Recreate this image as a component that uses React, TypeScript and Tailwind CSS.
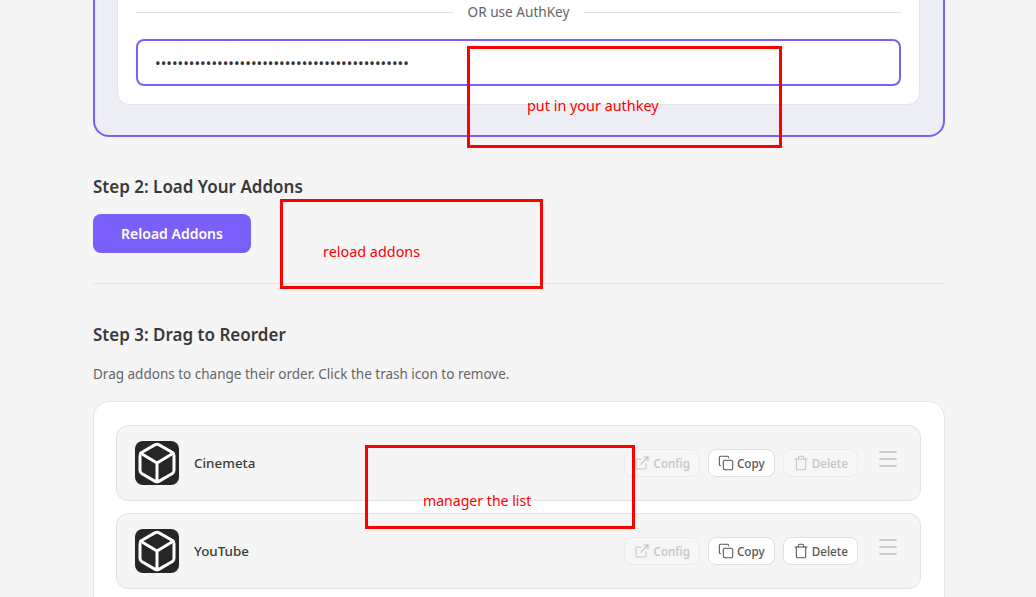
import { Copy, ExternalLink, Menu, Trash } from 'lucide-react';

const addons = [
  { name: 'Cinemeta', canDelete: false },
  { name: 'YouTube', canDelete: true },
];

// cube logo of an addon
function CubeIcon() {
  return (
    <svg viewBox="0 0 44 44" className="h-[44px] w-[44px]" fill="none" stroke="white" strokeWidth="3" strokeLinejoin="round" strokeLinecap="round">
      <path d="M19.8 3.9 7 11.2a4 4 0 0 0-2 3.5v14.6a4 4 0 0 0 2 3.5l12.8 7.3a4.4 4.4 0 0 0 4.4 0L37 32.8a4 4 0 0 0 2-3.5V14.7a4 4 0 0 0-2-3.5L24.2 3.9a4.4 4.4 0 0 0-4.4 0Z" />
      <path d="M5.8 12.2 22 22l16.2-9.8" />
      <path d="M22 22v18.4" />
    </svg>
  );
}

function ActionButton({
  label,
  disabled,
  children,
}: {
  label: string;
  disabled?: boolean;
  children: React.ReactNode;
}) {
  return (
    <button
      className={`flex h-[28px] items-center gap-[3px] rounded-lg border px-[9px] text-[11.7px] font-medium ${
        disabled
          ? 'border-[#ebebeb] bg-[#f6f6f6] text-[#c4c4c4]'
          : 'border-[#e0e0e0] bg-white text-[#555555]'
      }`}
    >
      {children}
      {label}
    </button>
  );
}

function AddonRow({ name, canDelete }: { name: string; canDelete: boolean }) {
  return (
    <div className="flex h-[76px] shrink-0 items-center rounded-xl border border-[#e2e2e2] bg-[#f5f5f5] pl-[18px] pr-[20px]">
      <div className="flex h-[44px] w-[44px] items-center justify-center rounded-lg bg-[#262626]">
        <CubeIcon />
      </div>
      <span className="ml-[15px] text-[13.4px] font-medium text-[#3a3a3a]">{name}</span>
      <div className="ml-auto flex items-center gap-[8px]">
        <ActionButton label="Config" disabled>
          <ExternalLink className="h-[16px] w-[16px]" strokeWidth={1.6} />
        </ActionButton>
        <ActionButton label="Copy">
          <Copy className="h-[16px] w-[16px]" strokeWidth={1.6} />
        </ActionButton>
        <ActionButton label="Delete" disabled={!canDelete}>
          <Trash className="h-[16px] w-[16px]" strokeWidth={1.6} />
        </ActionButton>
        <Menu className="mb-[8px] ml-[10px] h-[24px] w-[24px] text-[#cccccc]" strokeWidth={1.8} />
      </div>
    </div>
  );
}

function Note({ className, label }: { className: string; label: string }) {
  return (
    <div className={`absolute border-[3px] border-[#ff0000] ${className}`}>
      <span className="absolute whitespace-nowrap text-[#ff0000]">{label}</span>
    </div>
  );
}

export default function App() {
  return (
    <div className="relative h-[597px] w-[1036px] overflow-hidden bg-[#f5f5f5] font-['Noto_Sans','Open_Sans',sans-serif]">
      <div className="ml-[93px] -mt-[63px] w-[852px]">
        {/* AuthKey card, top is scrolled away */}
        <div className="rounded-2xl border-2 border-[#7b5ffa] bg-[#edeef5] pb-[30px] pl-[22px] pr-[23px] pt-[22px]">
          <div className="rounded-xl border border-[#e4e4e4] bg-white px-[18px] pb-[18px] pt-[40px]">
            <div className="flex items-center gap-[15px] text-[13.6px] text-[#666666]">
              <div className="h-px flex-1 bg-[#e0e0e0]" />
              <span>OR use AuthKey</span>
              <div className="h-px flex-1 bg-[#e0e0e0]" />
            </div>
            <input
              type="password"
              readOnly
              value="000000000000000000000000000000000000000000000"
              className="mt-[17px] block h-[47px] w-full rounded-lg border-2 border-[#7b5ffa] bg-white px-[17px] text-[15px] text-[#333333] outline-none"
            />
          </div>
        </div>

        <h2 className="mt-[38px] text-[17px] font-semibold leading-[24px] text-[#3a3a3a]">
          Step 2: Load Your Addons
        </h2>
        <button className="mt-[15px] block h-[39px] w-[158px] rounded-lg bg-[#7b5ffa] text-[14px] font-semibold text-white">
          Reload Addons
        </button>
        <div className="mt-[30px] h-px bg-[#e2e2e2]" />

        <h2 className="mt-[39px] text-[17px] font-semibold leading-[24px] text-[#3a3a3a]">
          Step 3: Drag to Reorder
        </h2>
        <p className="mt-[18px] text-[13.5px] leading-[18px] text-[#666666]">
          Drag addons to change their order. Click the trash icon to remove.
        </p>
        <div className="mt-[18px] flex flex-col gap-[12px] rounded-2xl border border-[#e4e4e4] bg-white pb-[23px] pl-[22px] pr-[23px] pt-[23px]">
          {addons.map((a) => (
            <AddonRow key={a.name} name={a.name} canDelete={a.canDelete} />
          ))}
        </div>
      </div>

      <Note className="left-[467px] top-[46px] h-[102px] w-[315px] text-[14.4px] [&>span]:left-[57px] [&>span]:top-[46px]" label="put in your authkey" />
      <Note className="left-[280px] top-[199px] h-[90px] w-[263px] text-[14.4px] [&>span]:left-[40px] [&>span]:top-[39px]" label="reload addons" />
      <Note className="left-[365px] top-[445px] h-[84px] w-[270px] text-[14.1px] [&>span]:left-[55px] [&>span]:top-[42px]" label="manager the list" />
    </div>
  );
}
